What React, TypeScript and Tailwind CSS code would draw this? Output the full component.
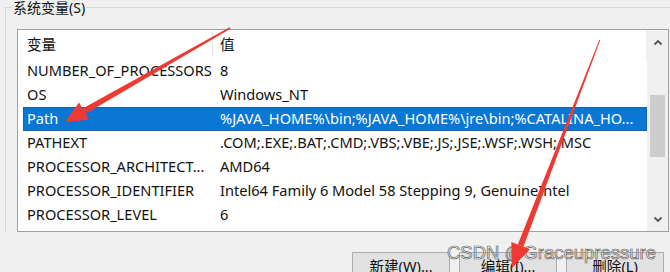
import React from "react";

const rows: [string, string][] = [
  ["NUMBER_OF_PROCESSORS", "8"],
  ["OS", "Windows_NT"],
  ["Path", "%JAVA_HOME%\\bin;%JAVA_HOME%\\jre\\bin;%CATALINA_HO..."],
  ["PATHEXT", ".COM;.EXE;.BAT;.CMD;.VBS;.VBE;.JS;.JSE;.WSF;.WSH;.MSC"],
  ["PROCESSOR_ARCHITECT...", "AMD64"],
  ["PROCESSOR_IDENTIFIER", "Intel64 Family 6 Model 58 Stepping 9, GenuineIntel"],
  ["PROCESSOR_LEVEL", "6"],
];

function Chevron({ up }: { up?: boolean }) {
  return (
    <svg width="10" height="7" viewBox="0 0 10 7">
      <polyline
        points={up ? "1.5,5.5 5,2 8.5,5.5" : "1.5,1.5 5,5 8.5,1.5"}
        fill="none"
        stroke="#555"
        strokeWidth="1.8"
      />
    </svg>
  );
}

export default function App() {
  return (
    <div
      className="relative w-[670px] h-[272px] overflow-hidden bg-[#f0f0f0] text-[14.6px] text-[#111]"
      style={{ fontFamily: '"Noto Sans", "Noto Sans CJK SC", sans-serif' }}
    >
      <div className="ml-[5px] mt-[7px] border-t border-l border-[#d9d9d9] pt-[21px] pl-[11px]">
        <span className="absolute left-[12px] top-[0px] bg-[#f0f0f0] px-[1px] leading-[15px] text-[14px]">
          系统变量(S)
        </span>
        <div className="flex w-[652px] h-[203px] border border-[#a0a0a0] bg-white">
          <div className="flex-1 flex flex-col">
            <div className="flex h-[29px] items-center border-r border-[#ededed]">
              <div className="w-[194px] pl-[9px]">变量</div>
              <div className="w-px h-[25px] bg-[#e5e5e5]" />
              <div className="pl-[7px]">值</div>
            </div>
            <div className="flex flex-col pl-[5px]">
              {rows.map(([k, v], i) => {
                const sel = i === 2;
                return (
                  <div
                    key={k}
                    className={
                      "flex h-[24px] items-center whitespace-nowrap " +
                      (sel ? "bg-[#0a77d5] text-white border border-[#1c5fae]" : "border border-transparent")
                    }
                  >
                    <div className="w-[192px] pl-[3px]">{k}</div>
                    <div className="pl-[4px]">{v}</div>
                  </div>
                );
              })}
            </div>
          </div>
          <div className="w-[21px] flex flex-col bg-[#f0f0f0]">
            <div className="h-[25px] flex items-center justify-center">
              <Chevron up />
            </div>
            <div className="flex-1">
              <div className="mx-auto mt-[40px] w-[15px] h-[62px] bg-[#cdcdcd]" />
            </div>
            <div className="h-[24px] flex items-center justify-center">
              <Chevron />
            </div>
          </div>
        </div>
      </div>

      <div className="flex gap-[9px] ml-[352px] mt-[20px]">
        {["新建(W)...", "编辑(I)...", "删除(L)"].map((t) => (
          <div
            key={t}
            className="w-[98px] h-[30px] flex items-center justify-center bg-[#e1e1e1] border border-[#adadad] text-[14.6px]"
          >
            {t}
          </div>
        ))}
      </div>

      <div
        className="absolute left-[447px] top-[241px] text-[18.5px] leading-[24px] text-[rgba(255,255,255,0.55)] [-webkit-text-stroke:0.7px_#666] whitespace-nowrap"
        style={{ fontFamily: '"Liberation Sans", Arial, sans-serif' }}
      >
        CSDN @Graceupressure
      </div>

      <svg className="absolute inset-0 pointer-events-none" width="670" height="272" viewBox="0 0 670 272">
        <polygon points="230.4,28.7 229.6,27.3 82.6,108.5 85.6,113.7" fill="#ee3a32" />
        <polygon points="65,122 79,102.4 89.1,119.8" fill="#ee3a32" />
        <polygon points="600.3,40.1 599.3,39.9 517.8,244.5 523.4,246.7" fill="#ee3a32" />
        <polygon points="512,268 511.3,242 529.9,249.2" fill="#ee3a32" />
      </svg>
    </div>
  );
}
